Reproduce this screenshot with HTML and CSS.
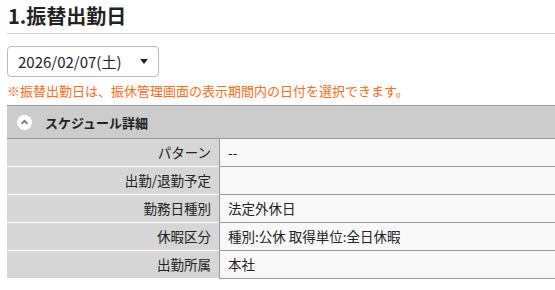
FILE: index.html
```html
<!DOCTYPE html>
<html lang="ja">
<head>
	<meta charset="UTF-8">
	<title>振替出勤日</title>
	<link rel="stylesheet" href="styles.css">
</head>
<body>
	<div class="page">
		<h1 class="title">1.振替出勤日</h1>

		<div class="date-select">
			<span class="date-text">2026/02/07(土)</span>
			<span class="caret"></span>
		</div>
		<p class="note">※振替出勤日は、振休管理画面の表示期間内の日付を選択できます。</p>

		<div class="section">
			<div class="section-head">
				<span class="toggle">
					<svg width="15" height="15" viewBox="0 0 14 14">
						<circle cx="7" cy="7" r="7" fill="#fff"/>
						<path d="M4.2 8.2 L7 5.4 L9.8 8.2" fill="none" stroke="#777" stroke-width="1.6"/>
					</svg>
				</span>
				<span class="section-title">スケジュール詳細</span>
			</div>
			<div class="row">
				<div class="label">パターン</div>
				<div class="value">--</div>
			</div>
			<div class="row">
				<div class="label">出勤/退勤予定</div>
				<div class="value"></div>
			</div>
			<div class="row">
				<div class="label">勤務日種別</div>
				<div class="value">法定外休日</div>
			</div>
			<div class="row">
				<div class="label">休暇区分</div>
				<div class="value">種別:公休 取得単位:全日休暇</div>
			</div>
			<div class="row">
				<div class="label">出勤所属</div>
				<div class="value">本社</div>
			</div>
		</div>
	</div>
</body>
</html>
```
FILE: styles.css
```css
body{
	margin: 0;
	background-color: #fff;
	font-family: "Noto Sans CJK JP", "Noto Sans", sans-serif;
	color: #222;
}
.page{
	padding: 0 0 0 7px;
}
.title{
	margin: 0;
	padding: 3px 0 4px 1px;
	font-size: 20px;
	line-height: 26px;
	font-weight: bold;
	color: #222;
	border-bottom: 1px solid #ccc;
}
.date-select{
	margin-top: 12px;
	width: 152px;
	height: 31px;
	box-sizing: border-box;
	border: 1px solid #bbb;
	border-radius: 4px;
	background-color: #fff;
	display: flex;
	align-items: center;
	padding: 0 0 0 10px;
}
.date-text{
	font-size: 15px;
	line-height: 20px;
	color: #222;
	flex: 1;
}
.caret{
	width: 0;
	height: 0;
	border-left: 4px solid transparent;
	border-right: 4px solid transparent;
	border-top: 5px solid #222;
	margin-right: 10px;
}
.note{
	margin: 5px 0 0;
	font-size: 13px;
	line-height: 18px;
	color: #ff6a13;
}
.section{
	margin-top: 5px;
}
.section-head{
	height: 32px;
	background-color: #ccc;
	border-top: 1px solid #999;
	border-bottom: 1px solid #999;
	display: flex;
	align-items: center;
	padding-left: 10px;
}
.toggle{
	display: flex;
	margin-right: 13px;
}
.section-title{
	font-size: 13px;
	font-weight: bold;
	color: #222;
}
.row{
	display: flex;
	height: 28px;
}
.label{
	width: 212px;
	box-sizing: border-box;
	background-color: #d6d6d6;
	border-bottom: 1px solid #fff;
	text-align: right;
	padding-right: 8px;
	font-size: 13.5px;
	line-height: 27px;
	color: #222;
}
.value{
	flex: 1;
	background-color: #f8f8f8;
	border-left: 1px solid #999;
	border-bottom: 1px solid #999;
	padding-left: 8px;
	font-size: 13.5px;
	line-height: 27px;
	color: #222;
}
```
